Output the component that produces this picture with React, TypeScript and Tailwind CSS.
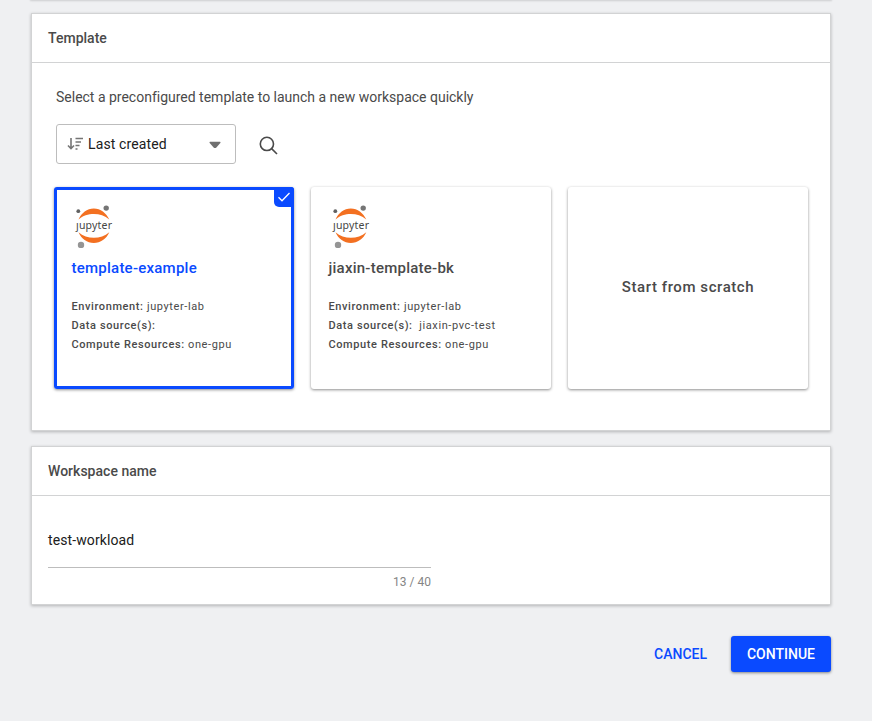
import type { ReactNode } from 'react';

const panelClass =
  'w-[800px] border border-[#d2d3d4] bg-white shadow-[0_1px_3px_rgba(0,0,0,0.25)]';

function JupyterLogo() {
  return (
    <svg width="40" height="44" viewBox="0 0 40 44" className="block">
      <path d="M4.500 14.6C7.300 8 13.100 3.500 19.800 3.500S32.300 8 35.300 14.6C30.900 10.6 25.500 9 19.900 9S8.800 10.600 4.500 14.600Z" fill="#f37021" />
      <path d="M4.500 27.200C8.800 31 14.300 32.700 19.900 32.700S30.900 31 35.300 27.200C32.500 33.800 26.500 38 19.800 38S7.300 33.800 4.500 27.200Z" fill="#f37021" />
      <circle cx="4.300" cy="6.200" r="1.900" fill="#616161" />
      <circle cx="32.200" cy="3.100" r="2.700" fill="#757575" />
      <circle cx="7" cy="39.900" r="3.200" fill="#959595" />
      <text x="2" y="23.800" fontSize="10.500" fill="#454545" textLength="36" lengthAdjust="spacing" className="font-['Noto_Sans',sans-serif]">
        ȷupyter
      </text>
    </svg>
  );
}

function Panel({ title, children, className }: { title: string; children: ReactNode; className: string }) {
  return (
    <section className={`${panelClass} ${className}`}>
      <h2 className="h-[49px] border-b border-[#d2d3d4] pl-4 text-sm font-medium leading-[49px] tracking-[0.02px] text-[#4a4a4a]">
        {title}
      </h2>
      {children}
    </section>
  );
}

function Row({ label, value }: { label: string; value: string }) {
  return (
    <p className="h-[19px] whitespace-pre">
      <span className="font-medium">{label}</span> {value}
    </p>
  );
}

function TemplateCard({ name, source, selected }: { name: string; source: string; selected?: boolean }) {
  return (
    <article
      className={
        'relative h-[201.5px] w-[240px] rounded-[3px] shadow-[0_1px_3px_rgba(0,0,0,0.45)] ' +
        (selected ? 'border-[3px] border-[#0a4aff] pl-[14.5px] pt-[14px]' : 'pl-[17.5px] pt-[17px]')
      }
    >
      {selected && (
        <span className="absolute -right-[3px] -top-[3px] flex h-5 w-5 items-center justify-center rounded-bl-[5px] rounded-tr-[3px] bg-[#0a4aff]">
          <svg width="14" height="12" viewBox="0 0 14 12" fill="none">
            <path d="M1.500 6.300 5 9.800 12.500 2" stroke="#fff" strokeWidth="1.300" />
          </svg>
        </span>
      )}
      <div className="pl-[2.500px] pt-[0.500px]">
        <JupyterLogo />
      </div>
      <h3 className={'mt-[8.500px] text-[15px] font-medium leading-[22px] tracking-[0.240px] ' + (selected ? 'text-[#0a4aff]' : 'text-[#4a4a4a]')}>
        {name}
      </h3>
      <div className="mt-[17.500px] text-[11px] leading-[19px] tracking-[0.600px] text-[#4a4a4a]">
        <Row label="Environment:" value="jupyter-lab" />
        <Row label="Data source(s):" value={source} />
        <Row label="Compute Resources:" value="one-gpu" />
      </div>
    </article>
  );
}

export default function App() {
  return (
    <main className="h-[721px] overflow-hidden bg-[#eff0f2] pl-[31px] font-[Roboto,sans-serif] text-sm">
      <div className="h-0 w-[800px] shadow-[0_0_2px_1px_rgba(0,0,0,0.15)]" />
      <Panel title="Template" className="mt-[13px] h-[418px]">
        <div className="pl-6 pt-6">
          <p className="h-5 leading-5 tracking-[-0.005px] text-[#4a4a4a]">
            Select a preconfigured template to launch a new workspace quickly
          </p>
          <div className="mt-[17px] flex h-10 items-center">
            <button className="flex h-10 w-[180px] items-center rounded-[3px] border border-[#bdbdbd] pl-[10px] text-[#202020]">
              <svg width="16" height="16" viewBox="0 0 16 16" fill="none" stroke="#757575">
                <path d="M4 2V12.500M1 9.500 4 12.700 7 9.500" strokeWidth="1.600" />
                <path d="M8.500 2.500H16M8.500 6H14M8.500 9.500H12.500M8.500 13H10.500" strokeWidth="1.600" />
              </svg>
              <span className="ml-[5px] w-[121px] text-left tracking-[0.130px]">Last created</span>
              <svg width="12" height="8" viewBox="0 0 12 8" className="mt-[2px]">
                <path d="M1 .8H11Q12 1 11.300 1.900L7.400 6.500Q6 7.700 4.600 6.500L.7 1.900Q0 1 1 .8Z" fill="#707070" />
              </svg>
            </button>
            <svg width="20" height="20" viewBox="0 0 20 20" fill="none" stroke="#4a4a4a" strokeWidth="1.600" className="ml-[23px] mt-[3px]">
              <circle cx="7.900" cy="7.900" r="6.600" />
              <path d="M12.600 12.600 18 18" />
            </svg>
          </div>
          <div className="-ml-[2px] mt-[23px] flex gap-[17px]">
            <TemplateCard name="template-example" source="" selected />
            <TemplateCard name="jiaxin-template-bk" source=" jiaxin-pvc-test" />
            <article className="flex h-[201.5px] w-[240px] items-center justify-center rounded-[3px] text-[15px] font-medium tracking-[0.570px] text-[#4a4a4a] shadow-[0_1px_3px_rgba(0,0,0,0.45)]">
              Start from scratch
            </article>
          </div>
        </div>
      </Panel>
      <Panel title="Workspace name" className="mt-[15px] h-[159px]">
        <div className="ml-4 w-[383px]">
          <div className="h-[72px] border-b border-[#bdbdbd] pt-[34px] leading-5 tracking-[0.100px] text-[#202020]">
            test-workload
          </div>
          <p className="mt-[5px] text-right text-xs leading-[18px] text-[#858585]">13 / 40</p>
        </div>
      </Panel>
      <div className="mt-[31px] flex w-[800px] justify-end gap-2 font-medium">
        <button className="h-9 px-4 text-[#0a4aff]">CANCEL</button>
        <button className="h-9 w-[100px] rounded-[3px] bg-[#0a4aff] text-white shadow-[0_1px_3px_rgba(0,0,0,0.45)]">CONTINUE</button>
      </div>
    </main>
  );
}
